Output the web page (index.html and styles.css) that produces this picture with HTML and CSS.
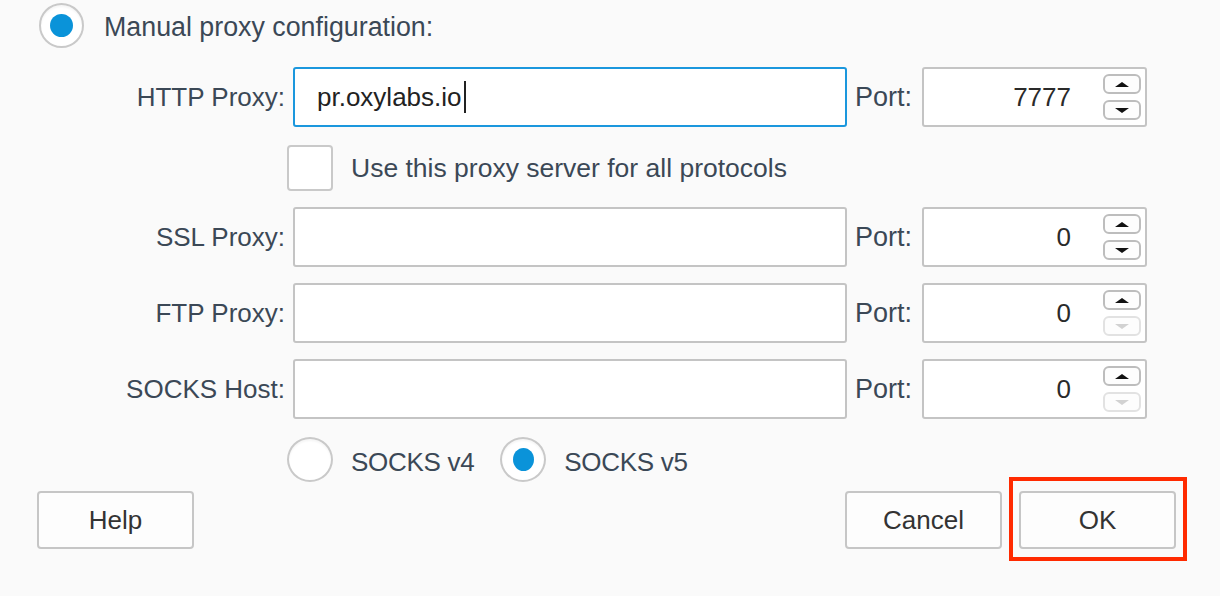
FILE: index.html
```html
<!DOCTYPE html>
<html>
<head>
<meta charset="utf-8">
<link rel="stylesheet" href="styles.css">
</head>
<body>
<div class="dialog">
  <div class="mode-row">
    <span class="radio checked"></span>
    <span class="label-text">Manual proxy configuration:</span>
  </div>

  <div class="form">
    <label class="field-label">HTTP Proxy:</label>
    <div class="input focused"><span class="value">pr.oxylabs.io</span><span class="caret"></span></div>
    <label class="port-label">Port:</label>
    <div class="port">
      <span class="port-value">7777</span>
      <span class="spinner">
        <span class="spin up"><i></i></span>
        <span class="spin down"><i></i></span>
      </span>
    </div>

    <div class="option-row check-row">
      <span class="checkbox"></span>
      <span class="label-text">Use this proxy server for all protocols</span>
    </div>

    <label class="field-label">SSL Proxy:</label>
    <div class="input"></div>
    <label class="port-label">Port:</label>
    <div class="port">
      <span class="port-value">0</span>
      <span class="spinner">
        <span class="spin up"><i></i></span>
        <span class="spin down"><i></i></span>
      </span>
    </div>

    <label class="field-label">FTP Proxy:</label>
    <div class="input"></div>
    <label class="port-label">Port:</label>
    <div class="port">
      <span class="port-value">0</span>
      <span class="spinner">
        <span class="spin up"><i></i></span>
        <span class="spin down disabled"><i></i></span>
      </span>
    </div>

    <label class="field-label">SOCKS Host:</label>
    <div class="input"></div>
    <label class="port-label">Port:</label>
    <div class="port">
      <span class="port-value">0</span>
      <span class="spinner">
        <span class="spin up"><i></i></span>
        <span class="spin down disabled"><i></i></span>
      </span>
    </div>

    <div class="option-row socks-row">
      <span class="radio"></span>
      <span class="label-text">SOCKS v4</span>
      <span class="radio checked v5"></span>
      <span class="label-text">SOCKS v5</span>
    </div>
  </div>

  <div class="buttons">
    <button class="btn">Help</button>
    <div class="right-buttons">
      <button class="btn">Cancel</button>
      <button class="btn ok">OK</button>
    </div>
  </div>
</div>
</body>
</html>
```

FILE: styles.css
```css
html, body {
  margin: 0;
  padding: 0;
  background: #fafafa;
}

body {
  width: 1220px;
  height: 596px;
  overflow: hidden;
  font-family: "Liberation Sans", Arial, sans-serif;
  font-size: 26px;
  color: #3b4856;
}

.dialog {
  padding-top: 3px;
}

.mode-row {
  display: flex;
  align-items: center;
  height: 45px;
  padding-left: 39px;
  gap: 20px;
}

.mode-row .label-text {
  font-size: 26.8px;
  margin-top: 3px;
}

.radio {
  box-sizing: border-box;
  width: 45px;
  height: 45px;
  flex: none;
  border-radius: 50%;
  border: 2px solid #c9c9c9;
  background: #ffffff;
  box-shadow: inset 0 2px 2px rgba(0,0,0,0.04);
  display: flex;
  align-items: center;
  justify-content: center;
}

.radio.checked::after {
  content: "";
  width: 23px;
  height: 23px;
  border-radius: 50%;
  background: #0a93d9;
}

.label-text {
  white-space: nowrap;
  line-height: 30px;
}

.form {
  margin-top: 19px;
  display: grid;
  grid-template-columns: 285px 554px 59px 225px;
  grid-template-rows: 60px 48px 60px 60px 60px 47px;
  column-gap: 8px;
  row-gap: 16px;
}

.field-label {
  text-align: right;
  align-self: center;
  white-space: nowrap;
}

.port-label {
  align-self: center;
  font-size: 27px;
}

.input {
  box-sizing: border-box;
  height: 60px;
  border: 2px solid #c4c4c4;
  border-radius: 3px;
  background: #ffffff;
  display: flex;
  align-items: center;
  padding-left: 22px;
  color: #222222;
}

.input.focused {
  border-color: #1b97dd;
}

.caret {
  width: 2px;
  height: 32px;
  background: #222222;
  margin-left: 2px;
}

.port {
  box-sizing: border-box;
  height: 60px;
  border: 2px solid #c4c4c4;
  border-radius: 3px;
  background: #ffffff;
  display: flex;
  align-items: center;
  padding-right: 4px;
  color: #2a2a2a;
}

.port-value {
  flex: 1;
  text-align: right;
}

.spinner {
  margin-left: 32px;
  width: 38px;
  display: flex;
  flex-direction: column;
  gap: 6px;
}

.spin {
  box-sizing: border-box;
  height: 20px;
  border: 2px solid #bdbdbd;
  border-radius: 6px;
  background: #fdfdfd;
  display: flex;
  align-items: center;
  justify-content: center;
}

.spin i {
  width: 0;
  height: 0;
  border-left: 7px solid transparent;
  border-right: 7px solid transparent;
}

.spin.up i {
  border-bottom: 5px solid #111111;
}

.spin.down i {
  border-top: 5px solid #111111;
}

.spin.disabled {
  border-color: #e2e2e2;
}

.spin.disabled i {
  border-top-color: #d2d2d2;
}

.option-row {
  grid-column: 1 / -1;
  display: flex;
  align-items: flex-end;
  padding-left: 287px;
}

.check-row {
  gap: 18px;
}

.check-row .label-text {
  align-self: center;
  margin-top: 2px;
  font-size: 26.5px;
}

.checkbox {
  box-sizing: border-box;
  width: 46px;
  height: 46px;
  border: 2px solid #c9c9c9;
  border-radius: 4px;
  background: #ffffff;
}

.socks-row .radio {
  width: 46px;
  height: 45px;
}

.socks-row .label-text {
  margin-left: 18px;
  margin-bottom: 5px;
  letter-spacing: -0.3px;
}

.socks-row .radio.v5 {
  margin-left: 26px;
}

.socks-row .radio.checked::after {
  width: 21px;
  height: 23px;
}

.buttons {
  margin-top: 9px;
  display: flex;
  justify-content: space-between;
  padding: 0 44px 0 37px;
}

.right-buttons {
  display: flex;
  gap: 17px;
}

.btn {
  box-sizing: border-box;
  width: 157px;
  height: 58px;
  border: 2px solid #c6c6c6;
  border-radius: 4px;
  background: #fdfdfd;
  font-family: "Liberation Sans", Arial, sans-serif;
  font-size: 26px;
  color: #333333;
  padding: 0;
}

.btn.ok {
  position: relative;
}

.btn.ok::after {
  content: "";
  position: absolute;
  top: -16px;
  left: -12px;
  right: -13px;
  bottom: -14px;
  border: 4px solid #ff2a00;
}
```
